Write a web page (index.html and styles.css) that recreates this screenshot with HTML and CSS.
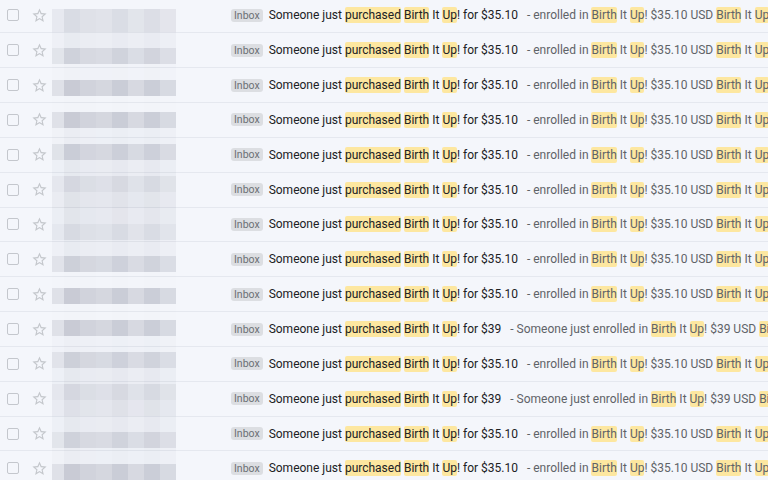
FILE: index.html
```html
<!DOCTYPE html>
<html>
<head>
<meta charset="utf-8">
<link rel="stylesheet" href="styles.css">
</head>
<body>
<svg width="0" height="0" class="defs">
  <symbol id="star" viewBox="0 0 24 24"><path d="M22 9.24l-7.19-.62L12 2 9.19 8.63 2 9.24l5.46 4.73L5.82 21 12 17.27 18.18 21l-1.63-7.03L22 9.24zM12 15.4l-3.76 2.27 1-4.28-3.32-2.88 4.38-.38L12 6.1l1.71 4.04 4.38.38-3.32 2.88 1 4.28L12 15.4z"/></symbol>
</svg>
<div class="list">
  <div class="row"><span class="cb"></span><svg class="star"><use href="#star"/></svg><span class="sender"></span><span class="label">Inbox</span><span class="subj">Someone just <mark>purchased</mark> <mark>Birth</mark> It <mark>Up</mark>! for $35.10<span class="snip">- enrolled in <mark>Birth</mark> It <mark>Up</mark>! $35.10 USD <mark>Birth</mark> It <mark>Up</mark>! $35.10</span></span></div>
  <div class="row"><span class="cb"></span><svg class="star"><use href="#star"/></svg><span class="sender"></span><span class="label">Inbox</span><span class="subj">Someone just <mark>purchased</mark> <mark>Birth</mark> It <mark>Up</mark>! for $35.10<span class="snip">- enrolled in <mark>Birth</mark> It <mark>Up</mark>! $35.10 USD <mark>Birth</mark> It <mark>Up</mark>! $35.10</span></span></div>
  <div class="row"><span class="cb"></span><svg class="star"><use href="#star"/></svg><span class="sender"></span><span class="label">Inbox</span><span class="subj">Someone just <mark>purchased</mark> <mark>Birth</mark> It <mark>Up</mark>! for $35.10<span class="snip">- enrolled in <mark>Birth</mark> It <mark>Up</mark>! $35.10 USD <mark>Birth</mark> It <mark>Up</mark>! $35.10</span></span></div>
  <div class="row"><span class="cb"></span><svg class="star"><use href="#star"/></svg><span class="sender"></span><span class="label">Inbox</span><span class="subj">Someone just <mark>purchased</mark> <mark>Birth</mark> It <mark>Up</mark>! for $35.10<span class="snip">- enrolled in <mark>Birth</mark> It <mark>Up</mark>! $35.10 USD <mark>Birth</mark> It <mark>Up</mark>! $35.10</span></span></div>
  <div class="row"><span class="cb"></span><svg class="star"><use href="#star"/></svg><span class="sender"></span><span class="label">Inbox</span><span class="subj">Someone just <mark>purchased</mark> <mark>Birth</mark> It <mark>Up</mark>! for $35.10<span class="snip">- enrolled in <mark>Birth</mark> It <mark>Up</mark>! $35.10 USD <mark>Birth</mark> It <mark>Up</mark>! $35.10</span></span></div>
  <div class="row"><span class="cb"></span><svg class="star"><use href="#star"/></svg><span class="sender"></span><span class="label">Inbox</span><span class="subj">Someone just <mark>purchased</mark> <mark>Birth</mark> It <mark>Up</mark>! for $35.10<span class="snip">- enrolled in <mark>Birth</mark> It <mark>Up</mark>! $35.10 USD <mark>Birth</mark> It <mark>Up</mark>! $35.10</span></span></div>
  <div class="row"><span class="cb"></span><svg class="star"><use href="#star"/></svg><span class="sender"></span><span class="label">Inbox</span><span class="subj">Someone just <mark>purchased</mark> <mark>Birth</mark> It <mark>Up</mark>! for $35.10<span class="snip">- enrolled in <mark>Birth</mark> It <mark>Up</mark>! $35.10 USD <mark>Birth</mark> It <mark>Up</mark>! $35.10</span></span></div>
  <div class="row"><span class="cb"></span><svg class="star"><use href="#star"/></svg><span class="sender"></span><span class="label">Inbox</span><span class="subj">Someone just <mark>purchased</mark> <mark>Birth</mark> It <mark>Up</mark>! for $35.10<span class="snip">- enrolled in <mark>Birth</mark> It <mark>Up</mark>! $35.10 USD <mark>Birth</mark> It <mark>Up</mark>! $35.10</span></span></div>
  <div class="row"><span class="cb"></span><svg class="star"><use href="#star"/></svg><span class="sender"></span><span class="label">Inbox</span><span class="subj">Someone just <mark>purchased</mark> <mark>Birth</mark> It <mark>Up</mark>! for $35.10<span class="snip">- enrolled in <mark>Birth</mark> It <mark>Up</mark>! $35.10 USD <mark>Birth</mark> It <mark>Up</mark>! $35.10</span></span></div>
  <div class="row"><span class="cb"></span><svg class="star"><use href="#star"/></svg><span class="sender"></span><span class="label">Inbox</span><span class="subj">Someone just <mark>purchased</mark> <mark>Birth</mark> It <mark>Up</mark>! for $39<span class="snip">- Someone just enrolled in <mark>Birth</mark> It <mark>Up</mark>! $39 USD <mark>Birth</mark> It <mark>Up</mark>!</span></span></div>
  <div class="row"><span class="cb"></span><svg class="star"><use href="#star"/></svg><span class="sender"></span><span class="label">Inbox</span><span class="subj">Someone just <mark>purchased</mark> <mark>Birth</mark> It <mark>Up</mark>! for $35.10<span class="snip">- enrolled in <mark>Birth</mark> It <mark>Up</mark>! $35.10 USD <mark>Birth</mark> It <mark>Up</mark>! $35.10</span></span></div>
  <div class="row"><span class="cb"></span><svg class="star"><use href="#star"/></svg><span class="sender"></span><span class="label">Inbox</span><span class="subj">Someone just <mark>purchased</mark> <mark>Birth</mark> It <mark>Up</mark>! for $39<span class="snip">- Someone just enrolled in <mark>Birth</mark> It <mark>Up</mark>! $39 USD <mark>Birth</mark> It <mark>Up</mark>!</span></span></div>
  <div class="row"><span class="cb"></span><svg class="star"><use href="#star"/></svg><span class="sender"></span><span class="label">Inbox</span><span class="subj">Someone just <mark>purchased</mark> <mark>Birth</mark> It <mark>Up</mark>! for $35.10<span class="snip">- enrolled in <mark>Birth</mark> It <mark>Up</mark>! $35.10 USD <mark>Birth</mark> It <mark>Up</mark>! $35.10</span></span></div>
  <div class="row"><span class="cb"></span><svg class="star"><use href="#star"/></svg><span class="sender"></span><span class="label">Inbox</span><span class="subj">Someone just <mark>purchased</mark> <mark>Birth</mark> It <mark>Up</mark>! for $35.10<span class="snip">- enrolled in <mark>Birth</mark> It <mark>Up</mark>! $35.10 USD <mark>Birth</mark> It <mark>Up</mark>! $35.10</span></span></div>
</div>
<div class="mosaic">
  <div class="mrow first" style="--a:.12"><i></i><i></i><i></i><i></i><i></i><i></i><i></i><i></i></div>
  <div class="mrow" style="--a:.05"><i></i><i></i><i></i><i></i><i></i><i></i><i></i><i></i></div>
  <div class="mrow" style="--a:.17"><i></i><i></i><i></i><i></i><i></i><i></i><i></i><i></i></div>
  <div class="mrow" style="--a:.02"><i></i><i></i><i></i><i></i><i></i><i></i><i></i><i></i></div>
  <div class="mrow" style="--a:.2"><i></i><i></i><i></i><i></i><i></i><i></i><i></i><i></i></div>
  <div class="mrow" style="--a:.01"><i></i><i></i><i></i><i></i><i></i><i></i><i></i><i></i></div>
  <div class="mrow" style="--a:.2"><i></i><i></i><i></i><i></i><i></i><i></i><i></i><i></i></div>
  <div class="mrow" style="--a:.04"><i></i><i></i><i></i><i></i><i></i><i></i><i></i><i></i></div>
  <div class="mrow" style="--a:.19"><i></i><i></i><i></i><i></i><i></i><i></i><i></i><i></i></div>
  <div class="mrow" style="--a:.06"><i></i><i></i><i></i><i></i><i></i><i></i><i></i><i></i></div>
  <div class="mrow" style="--a:.14"><i></i><i></i><i></i><i></i><i></i><i></i><i></i><i></i></div>
  <div class="mrow" style="--a:.09"><i></i><i></i><i></i><i></i><i></i><i></i><i></i><i></i></div>
  <div class="mrow" style="--a:.08"><i></i><i></i><i></i><i></i><i></i><i></i><i></i><i></i></div>
  <div class="mrow" style="--a:.13"><i></i><i></i><i></i><i></i><i></i><i></i><i></i><i></i></div>
  <div class="mrow" style="--a:.05"><i></i><i></i><i></i><i></i><i></i><i></i><i></i><i></i></div>
  <div class="mrow" style="--a:.18"><i></i><i></i><i></i><i></i><i></i><i></i><i></i><i></i></div>
  <div class="mrow" style="--a:.01"><i></i><i></i><i></i><i></i><i></i><i></i><i></i><i></i></div>
  <div class="mrow" style="--a:.2"><i></i><i></i><i></i><i></i><i></i><i></i><i></i><i></i></div>
  <div class="mrow" style="--a:.01"><i></i><i></i><i></i><i></i><i></i><i></i><i></i><i></i></div>
  <div class="mrow" style="--a:.2"><i></i><i></i><i></i><i></i><i></i><i></i><i></i><i></i></div>
  <div class="mrow" style="--a:.03"><i></i><i></i><i></i><i></i><i></i><i></i><i></i><i></i></div>
  <div class="mrow" style="--a:.18"><i></i><i></i><i></i><i></i><i></i><i></i><i></i><i></i></div>
  <div class="mrow" style="--a:.06"><i></i><i></i><i></i><i></i><i></i><i></i><i></i><i></i></div>
  <div class="mrow" style="--a:.14"><i></i><i></i><i></i><i></i><i></i><i></i><i></i><i></i></div>
  <div class="mrow" style="--a:.1"><i></i><i></i><i></i><i></i><i></i><i></i><i></i><i></i></div>
  <div class="mrow" style="--a:.06"><i></i><i></i><i></i><i></i><i></i><i></i><i></i><i></i></div>
  <div class="mrow" style="--a:.17"><i></i><i></i><i></i><i></i><i></i><i></i><i></i><i></i></div>
  <div class="mrow" style="--a:.04"><i></i><i></i><i></i><i></i><i></i><i></i><i></i><i></i></div>
  <div class="mrow" style="--a:.2"><i></i><i></i><i></i><i></i><i></i><i></i><i></i><i></i></div>
</div>
</body>
</html>
```
FILE: styles.css
```css
html, body {
  margin: 0;
  padding: 0;
  height: 100%;
  overflow: hidden;
  background: #f4f6fb;
  font-family: Roboto, "Liberation Sans", sans-serif;
}
.defs { position: absolute; }
.list {
  margin-top: -1.5px;
}
.row {
  height: 34.85px;
  box-sizing: border-box;
  display: flex;
  align-items: center;
  border-bottom: 1px solid #e5e8ef;
  white-space: nowrap;
  overflow: hidden;
}
.cb {
  flex: 0 0 auto;
  width: 12px;
  height: 12px;
  box-sizing: border-box;
  border: 1.5px solid #c4c7cd;
  border-radius: 2px;
  margin-left: 7px;
}
.star {
  flex: 0 0 auto;
  width: 17px;
  height: 17px;
  margin-left: 12px;
  fill: #c4c7cc;
}
.sender {
  flex: 0 0 183px;
}
.label {
  flex: 0 0 auto;
  background: #dcdee2;
  color: #6b6f74;
  font-size: 10.5px;
  line-height: 13px;
  padding: 0 3px;
  border-radius: 3px;
}
.subj {
  margin-left: 6px;
  color: #202124;
  font-size: 12px;
  line-height: 14px;
}
.snip {
  color: #5f6368;
  margin-left: 9px;
}
mark {
  background: #fde7a0;
  color: inherit;
  border-radius: 2px;
  padding: 1px 0;
}
.mosaic {
  position: absolute;
  left: 52px;
  top: 9px;
  width: 124px;
}
.mrow {
  display: grid;
  grid-template-columns: 12px repeat(7, 16px);
  height: 16px;
}
.mrow.first { height: 23px; }
.mrow i { background: rgba(70, 75, 100, calc(var(--a) * var(--f, 1))); }
.mrow i:nth-child(1) { --f: .6; }
.mrow i:nth-child(2) { --f: 1.25; }
.mrow i:nth-child(3) { --f: 1; }
.mrow i:nth-child(4) { --f: .9; }
.mrow i:nth-child(5) { --f: 1.2; }
.mrow i:nth-child(6) { --f: .85; }
.mrow i:nth-child(7) { --f: 1.15; }
.mrow i:nth-child(8) { --f: .8; }
```
